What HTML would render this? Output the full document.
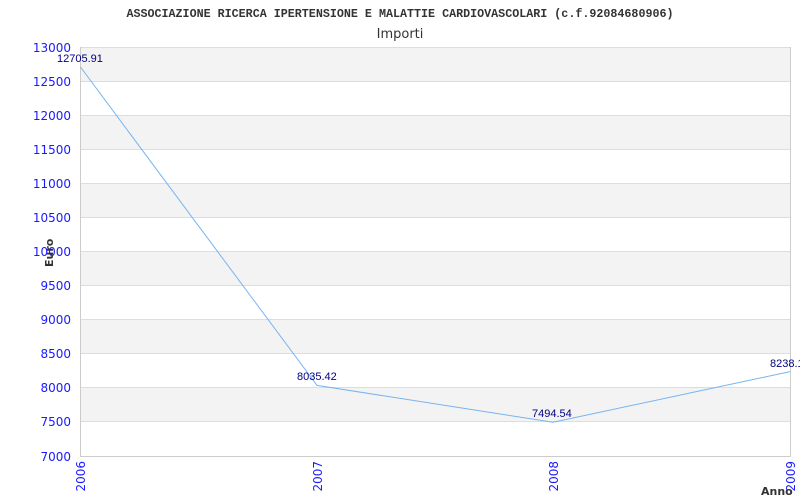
<!DOCTYPE html>
<html><head><meta charset="utf-8"><style>body{margin:0;background:#fff}svg{display:block}</style></head><body>
<svg width="800" height="500" xmlns="http://www.w3.org/2000/svg">
<rect width="800" height="500" fill="#fff"/>
<g fill="#f3f3f3">
<rect x="80" y="47" width="710" height="34.1"/>
<rect x="80" y="115.2" width="710" height="34.1"/>
<rect x="80" y="183.3" width="710" height="34.1"/>
<rect x="80" y="251.5" width="710" height="34.1"/>
<rect x="80" y="319.7" width="710" height="34.1"/>
<rect x="80" y="387.8" width="710" height="34.1"/>
</g>
<g stroke="#dddddd" stroke-width="1">
<line x1="80" y1="47.5" x2="790" y2="47.5"/><line x1="80" y1="81.5" x2="790" y2="81.5"/><line x1="80" y1="115.5" x2="790" y2="115.5"/><line x1="80" y1="149.5" x2="790" y2="149.5"/><line x1="80" y1="183.5" x2="790" y2="183.5"/><line x1="80" y1="217.5" x2="790" y2="217.5"/><line x1="80" y1="251.5" x2="790" y2="251.5"/><line x1="80" y1="285.5" x2="790" y2="285.5"/><line x1="80" y1="319.5" x2="790" y2="319.5"/><line x1="80" y1="353.5" x2="790" y2="353.5"/><line x1="80" y1="387.5" x2="790" y2="387.5"/><line x1="80" y1="421.5" x2="790" y2="421.5"/>
</g>
<g stroke="#cccccc"><line x1="80.5" y1="47" x2="80.5" y2="456"/><line x1="790.5" y1="47" x2="790.5" y2="456"/><line x1="80" y1="456.5" x2="791" y2="456.5"/></g>
<polyline points="80.5,67 317,385.4 553,422.3 790,371.6" fill="none" stroke="#77b4f0" stroke-width="1"/>
<text x="400" y="17" font-family="Liberation Mono, monospace" font-size="11.7" font-weight="bold" fill="#333" text-anchor="middle">ASSOCIAZIONE RICERCA IPERTENSIONE E MALATTIE CARDIOVASCOLARI (c.f.92084680906)</text>
<text x="400" y="38" font-family="DejaVu Sans, sans-serif" font-size="13" fill="#333" text-anchor="middle">Importi</text>
<g font-family="DejaVu Sans, sans-serif" font-size="12" fill="#1a1aff" text-anchor="end">
<text x="71" y="52">13000</text><text x="71" y="86">12500</text><text x="71" y="120">12000</text><text x="71" y="154">11500</text><text x="71" y="188">11000</text><text x="71" y="222">10500</text><text x="71" y="256">10000</text><text x="71" y="290">9500</text><text x="71" y="324">9000</text><text x="71" y="358">8500</text><text x="71" y="392">8000</text><text x="71" y="426">7500</text><text x="71" y="461">7000</text>
</g>
<g font-family="DejaVu Sans, sans-serif" font-size="12" fill="#1a1aff" text-anchor="end">
<text transform="translate(85,461) rotate(-90)">2006</text>
<text transform="translate(322,461) rotate(-90)">2007</text>
<text transform="translate(558,461) rotate(-90)">2008</text>
<text transform="translate(795,461) rotate(-90)">2009</text>
</g>
<g font-family="Liberation Sans, sans-serif" font-size="11" fill="#000080">
<text x="57" y="62">12705.91</text>
<text x="297" y="380">8035.42</text>
<text x="532" y="417">7494.54</text>
<text x="770" y="367">8238.1</text>
</g>
<text transform="translate(53,267) rotate(-90)" font-family="DejaVu Sans, sans-serif" font-size="11" font-weight="bold" fill="#333">Euro</text>
<text x="761" y="495" font-family="DejaVu Sans, sans-serif" font-size="11" font-weight="bold" fill="#333">Anno</text>
</svg>
</body></html>
